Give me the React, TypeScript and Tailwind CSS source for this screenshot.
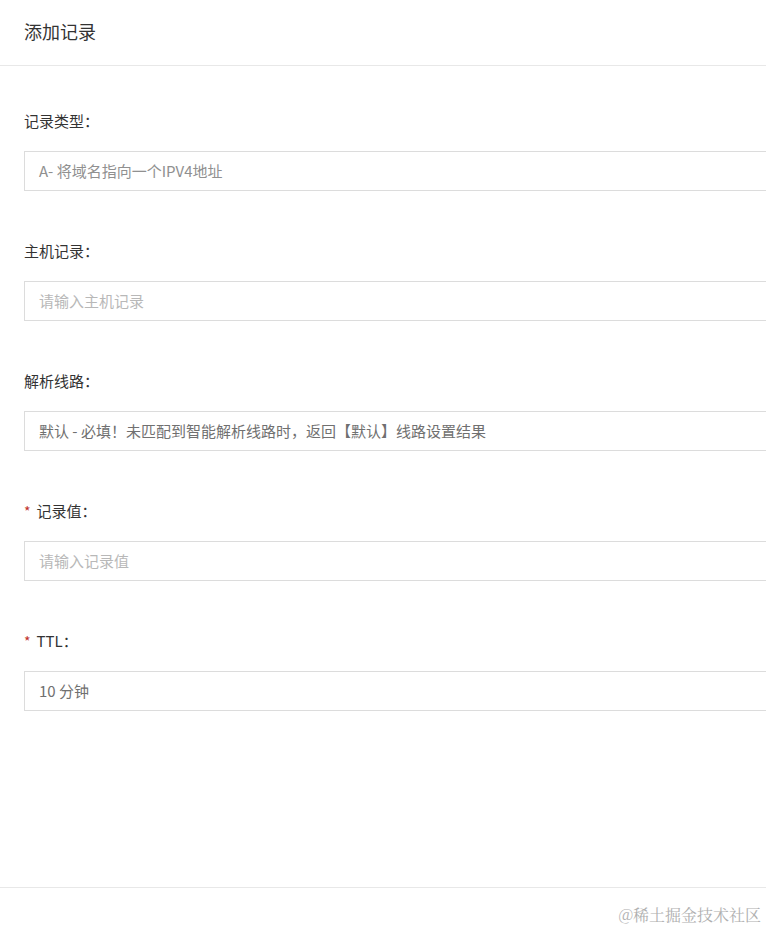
import React from "react";

interface IFieldProps {
   label: string;
   value: string;
   required?: boolean;
   tone?: "value" | "placeholder" | "muted";
}

const toneClass = {
   value: "text-[#707070]",
   muted: "text-[#909090]",
   placeholder: "text-[#b8b8b8]",
};

const Field = ({ label, value, required, tone = "placeholder" }: IFieldProps) => {
   return (
      <div className="flex flex-col">
         <div className="flex h-5 items-center text-[15px] text-[#333]">
            {required && <span className="mr-[6px] text-[14px] text-[#c0302a]">*</span>}
            <span>{label}：</span>
         </div>
         <div
            className={`mt-5 flex h-10 w-[760px] items-center border border-[#dcdcdc] bg-white px-[14px] text-[15px] ${toneClass[tone]}`}
         >
            {value}
         </div>
      </div>
   );
};

export default function App() {
   return (
      <div
         className="flex h-[930px] w-[766px] flex-col overflow-hidden bg-white"
         style={{ fontFamily: '"Noto Sans CJK SC", "Noto Sans", sans-serif' }}
      >
         <div className="flex h-[66px] shrink-0 items-center border-b border-[#e8e8e8] px-6 pb-[2px]">
            <span className="text-[18px] text-[#333]">添加记录</span>
         </div>
         <div className="flex flex-col gap-[50px] pl-6 pt-[45px]">
            <Field label="记录类型" value="A- 将域名指向一个IPV4地址" tone="muted" />
            <Field label="主机记录" value="请输入主机记录" />
            <Field
               label="解析线路"
               value="默认 - 必填！未匹配到智能解析线路时，返回【默认】线路设置结果"
               tone="value"
            />
            <Field label="记录值" value="请输入记录值" required />
            <Field label="TTL" value="10 分钟" required tone="value" />
         </div>
         <div className="mt-auto flex h-[43px] flex-col border-t border-[#e8e8e8]">
            <div className="flex justify-end pr-[5px] pt-[15px]">
               <span
                  className="text-[16px] text-[#b0b0b0]"
                  style={{ fontFamily: '"Noto Serif CJK SC", "Noto Sans CJK SC", serif' }}
               >
                  @稀土掘金技术社区
               </span>
            </div>
         </div>
      </div>
   );
}
